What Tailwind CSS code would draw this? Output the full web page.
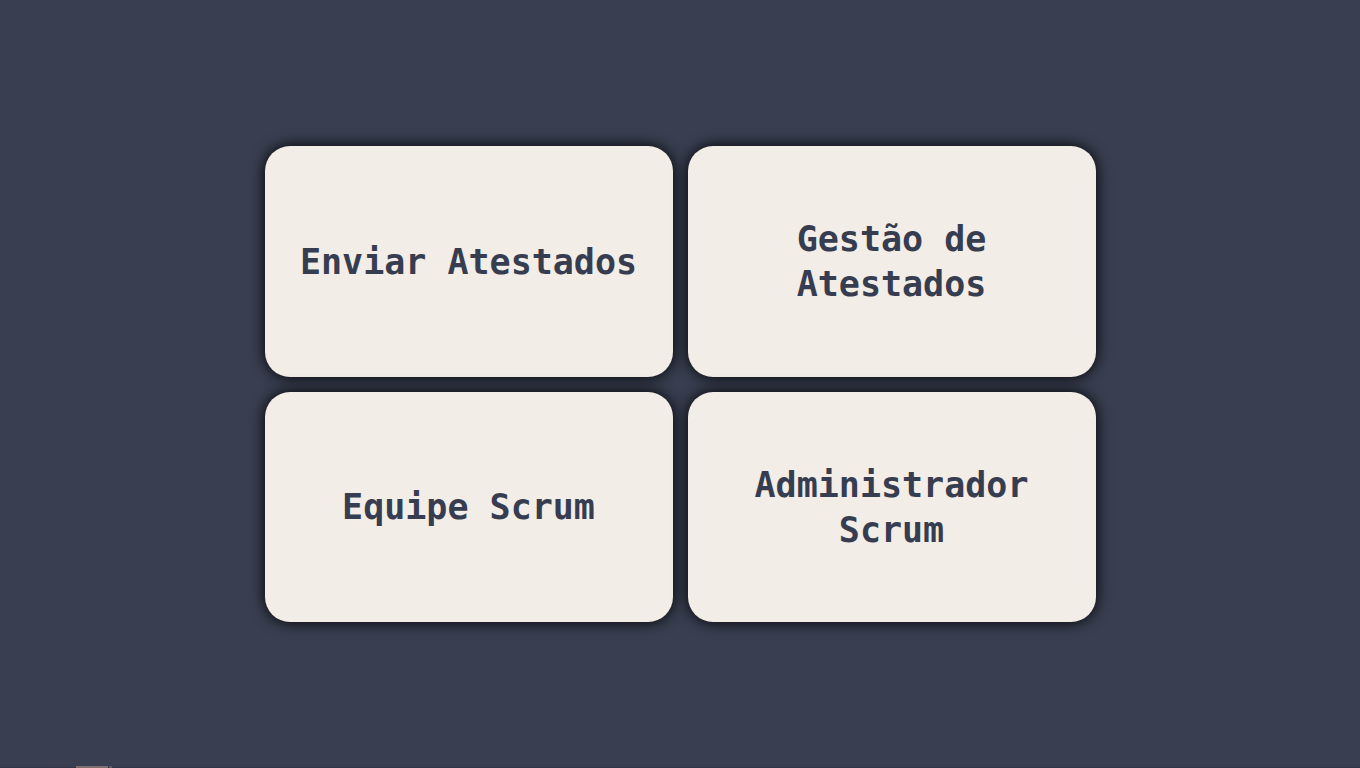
<!DOCTYPE html>
<html lang="pt-BR">
<head>
<meta charset="utf-8">
<meta name="viewport" content="width=device-width, initial-scale=1">
<title>Atestados</title>
<script src="https://cdn.jsdelivr.net/npm/@tailwindcss/browser@4"></script>
</head>
<body class="relative flex min-h-screen items-center justify-center bg-[#393f51] font-['Consolas','DejaVu_Sans_Mono',monospace] text-[35px] leading-[45px] font-bold text-[#373d50]">
<main class="grid auto-rows-[30vh] grid-cols-[30vw_30vw] gap-[15px] text-center">
<a href="#enviar" class="flex items-center justify-center rounded-[25px] bg-[#f2ede6] px-8 pt-0.5 shadow-[0_0_15px_#000000]">Enviar Atestados</a>
<a href="#gestao" class="flex items-center justify-center rounded-[25px] bg-[#f2ede6] px-8 pt-0.5 shadow-[0_0_15px_#000000]">Gestão de<br>Atestados</a>
<a href="#equipe" class="flex items-center justify-center rounded-[25px] bg-[#f2ede6] px-8 pt-0.5 shadow-[0_0_15px_#000000]">Equipe Scrum</a>
<a href="#administrador" class="flex items-center justify-center rounded-[25px] bg-[#f2ede6] px-8 pt-0.5 shadow-[0_0_15px_#000000]">Administrador<br>Scrum</a>
</main>
<div class="absolute inset-x-0 bottom-0 flex h-0.5 gap-px border-b border-[#333547] pl-[76px]" aria-hidden="true">
<span class="-mb-px h-0.5 w-8 bg-[#7d6f6f]"></span>
<span class="-mb-px h-0.5 w-[3px] bg-[#61585f]"></span>
</div>
</body>
</html>
